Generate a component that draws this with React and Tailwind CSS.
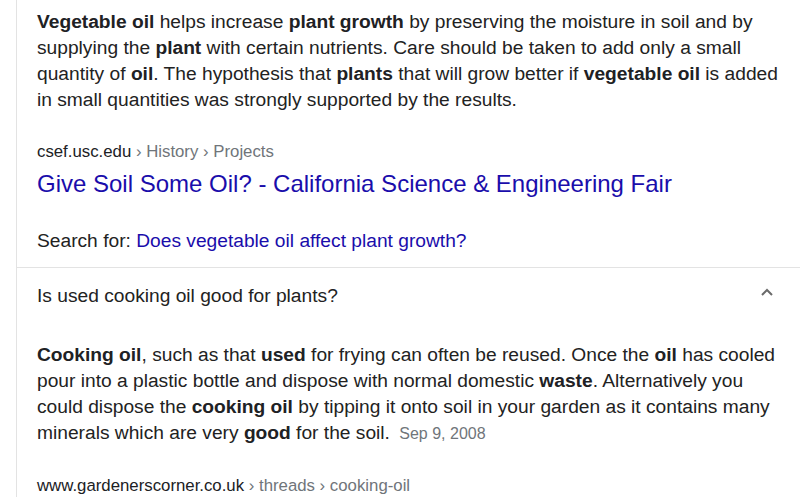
const B = ({ children }) => <b className="font-bold text-[#202124]">{children}</b>;

export default function App() {
  return (
    <div className="w-[800px] h-[497px] overflow-hidden bg-white font-['Liberation_Sans',Arial,sans-serif] text-[#222]">
      <div className="ml-4 border-l border-[#e3e3e3] h-full">
        {/* First answer */}
        <div className="pl-5 pr-2 pt-[9px]">
          <p className="text-[19.2px] leading-[26px]">
            <B>Vegetable oil</B> helps increase <B>plant growth</B> by preserving the moisture in soil and by<br />
            supplying the <B>plant</B> with certain nutrients. Care should be taken to add only a small<br />
            quantity of <B>oil</B>. The hypothesis that <B>plants</B> that will grow better if <B>vegetable oil</B> is added<br />
            in small quantities was strongly supported by the results.
          </p>
          <div className="mt-[29px] text-[16.8px] leading-5 text-[#202124]">
            csef.usc.edu <span className="text-[#70757a]">› History › Projects</span>
          </div>
          <div className="mt-[1px] text-[24px] leading-[42px] text-[#1a0dab]">
            Give Soil Some Oil? - California Science &amp; Engineering Fair
          </div>
          <div className="mt-[26px] text-[19.2px] leading-5 text-[#222]">
            Search for: <span className="text-[#1a0dab]">Does vegetable oil affect plant growth?</span>
          </div>
        </div>

        <div className="mt-[16px] border-t border-[#e3e3e3]" />

        {/* Second question */}
        <div className="flex items-center justify-between pl-5 pr-[26px] h-[56px]">
          <span className="text-[19.2px] text-[#222]">Is used cooking oil good for plants?</span>
          <svg width="14" height="10" viewBox="0 0 14 10" className="mb-2">
            <path d="M2 8 L7 3 L12 8" fill="none" stroke="#6b6b6b" strokeWidth="2" />
          </svg>
        </div>

        <div className="pl-5 pr-2 pt-[18px]">
          <p className="text-[19.2px] leading-[26px]">
            <B>Cooking oil</B>, such as that <B>used</B> for frying can often be reused. Once the <B>oil</B> has cooled<br />
            pour into a plastic bottle and dispose with normal domestic <B>waste</B>. Alternatively you<br />
            could dispose the <B>cooking oil</B> by tipping it onto soil in your garden as it contains many<br />
            minerals which are very <B>good</B> for the soil.{" "}
            <span className="ml-1 text-[16px] text-[#70757a]">Sep 9, 2008</span>
          </p>
          <div className="mt-[29px] text-[16.8px] leading-5 text-[#202124]">
            www.gardenerscorner.co.uk <span className="text-[#70757a]">› threads › cooking-oil</span>
          </div>
        </div>
      </div>
    </div>
  );
}
